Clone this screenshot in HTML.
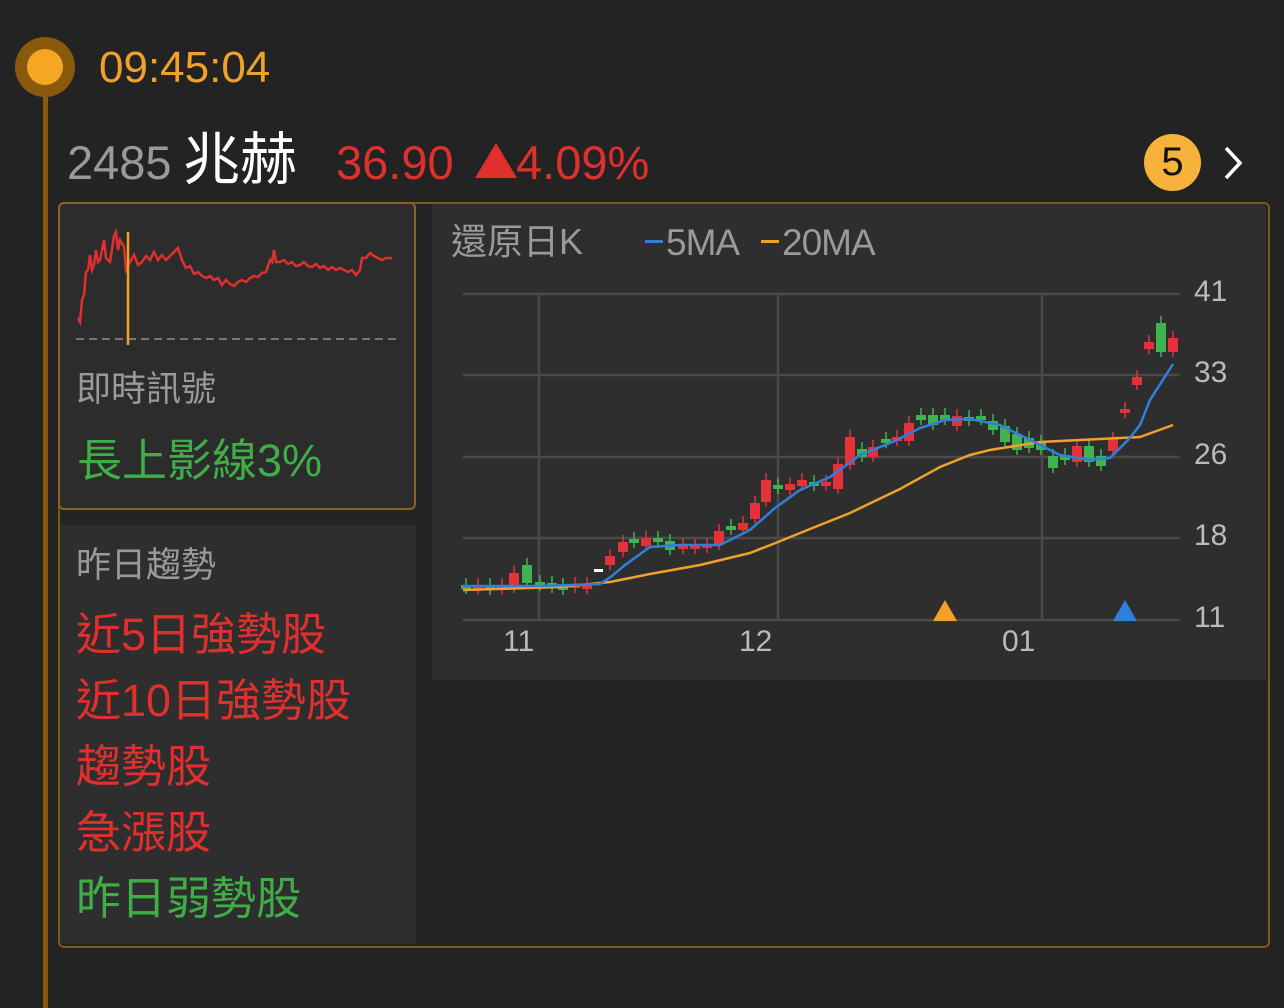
<!DOCTYPE html>
<html><head><meta charset="utf-8"><style>
body{margin:0;width:1284px;height:1008px;background:#232323;position:relative;overflow:hidden;font-family:"Liberation Sans","Noto Sans CJK TC",sans-serif}
.a{position:absolute;white-space:nowrap;line-height:1}
</style></head><body>
<div class="a" style="left:43px;top:90px;width:5px;height:918px;background:#8a5a0c"></div>
<div class="a" style="left:15px;top:37px;width:60px;height:60px;border-radius:50%;background:#8a5a0c"></div>
<div class="a" style="left:27px;top:49px;width:36px;height:36px;border-radius:50%;background:#f5a623"></div>
<div class="a" style="left:99px;top:46px;font-size:44px;color:#f0a12a">09:45:04</div>
<div class="a" style="left:67px;top:139px;font-size:47px;color:#9a9a9a">2485</div>
<div class="a" style="left:183px;top:132px;font-size:57px;color:#fff">兆赫</div>
<div class="a" style="left:336px;top:139px;font-size:47px;color:#e0302e">36.90</div>
<svg class="a" style="left:474px;top:143px" width="44" height="36"><polygon points="22,0 43,35 1,35" fill="#e0302e"/></svg>
<div class="a" style="left:516px;top:139px;font-size:47px;color:#e0302e">4.09%</div>
<div class="a" style="left:1144px;top:134px;width:57px;height:57px;border-radius:50%;background:#f6b23a;color:#111;font-size:40px;text-align:center;line-height:57px">5</div>
<svg class="a" style="left:1220px;top:145px" width="30" height="36"><path d="M6 3 L20 18 L6 33" stroke="#fff" stroke-width="3.5" fill="none"/></svg>
<div class="a" style="left:58px;top:202px;width:1208px;height:742px;border:2px solid #7a5a1c;border-radius:6px"></div>
<div class="a" style="width:354px;height:304px;background:#2c2c2c;border:2px solid #8a6420;border-radius:6px;left:58px;top:202px"></div>
<div class="a" style="left:60px;top:525px;width:356px;height:419px;background:#2e2e2e"></div>
<div class="a" style="left:432px;top:204px;width:834px;height:476px;background:#2e2e2e"></div>
<svg class="a" style="left:0;top:0" width="1284" height="1008">
<line x1="76" y1="339" x2="400" y2="339" stroke="#777" stroke-width="2" stroke-dasharray="8,5"/>
<polyline fill="none" stroke="#e0302e" stroke-width="2.5" points="78,318 80,322 82,300 84,295 86,272 88,270 90,255 92,270 94,265 96,250 98,262 100,260 104,240 106,258 110,262 114,236 116,232 118,250 120,240 124,247 126,270 130,262 134,255 138,265 142,262 146,256 150,260 154,252 158,260 162,255 166,260 170,256 174,252 178,248 182,260 186,268 190,266 194,274 198,272 202,276 206,278 210,276 214,280 218,278 222,285 226,280 230,284 234,286 238,282 242,280 246,282 250,278 254,276 258,277 262,273 266,272 270,260 272,262 274,250 276,262 280,262 284,260 288,264 292,262 296,266 300,265 304,262 308,266 312,267 316,264 320,268 324,266 328,270 332,267 336,270 340,268 344,270 348,272 352,270 356,275 360,270 362,258 366,258 370,253 374,256 378,258 382,260 386,258 392,258"/>
<line x1="128" y1="232" x2="128" y2="345" stroke="#f0a12a" stroke-width="2.5"/>
<g stroke="#4a4a4a" stroke-width="2.5">
<line x1="463" y1="294" x2="1180" y2="294"/><line x1="463" y1="375" x2="1180" y2="375"/><line x1="463" y1="457" x2="1180" y2="457"/><line x1="463" y1="538" x2="1180" y2="538"/><line x1="463" y1="620" x2="1180" y2="620"/>
<line x1="539" y1="294" x2="539" y2="620"/><line x1="778" y1="294" x2="778" y2="620"/><line x1="1042" y1="294" x2="1042" y2="620"/>
</g>
<g id="c"></g>
<polyline fill="none" stroke="#f0a12a" stroke-width="2.5" points="463,590 560,587 610,582 650,574 700,565 750,553 778,542 810,529 850,513 900,489 940,467 970,455 990,450 1040,442 1100,439 1140,437 1173,425"/>
<polyline fill="none" stroke="#2f7fdc" stroke-width="2.5" points="463,586 540,586 600,584 612,576 625,565 650,547 680,545 720,545 750,530 775,508 800,490 830,477 860,455 895,441 920,428 945,420 970,419 1000,425 1030,440 1060,455 1090,460 1110,458 1128,440 1140,425 1150,400 1173,364"/>
<polygon points="945,600 933,621 957,621" fill="#f0a12a"/>
<polygon points="1125,600 1113,621 1137,621" fill="#2f7fdc"/>
<rect x="594" y="569" width="9" height="3" fill="#fff"/>
<rect x="645" y="240" width="18" height="3" fill="#2f7fdc"/>
<rect x="761" y="240" width="18" height="3" fill="#f0a12a"/>
</svg>
<script>
var d=[[466,585,589,'g'],[478,585,589,'r'],[490,585,590,'g'],[502,585,590,'r'],[514,573,588,'r'],[527,565,583,'g'],[540,582,586,'g'],[552,583,588,'g'],[563,585,590,'g'],[575,584,588,'r'],[587,584,589,'r'],[610,556,565,'r'],[623,542,552,'r'],[634,539,543,'g'],[646,538,546,'r'],[658,538,542,'g'],[670,541,550,'g'],[683,545,549,'r'],[695,546,549,'r'],[707,545,548,'r'],[719,531,545,'r'],[731,526,530,'g'],[743,523,530,'r'],[755,503,519,'r'],[766,480,502,'r'],[778,485,489,'g'],[790,484,490,'r'],[802,480,486,'r'],[814,482,486,'g'],[826,482,486,'r'],[838,464,489,'r'],[850,437,465,'r'],[862,449,457,'g'],[873,447,457,'r'],[886,439,443,'g'],[897,437,441,'r'],[909,423,441,'r'],[921,415,420,'g'],[933,415,425,'g'],[945,415,420,'g'],[957,416,426,'r'],[969,417,421,'g'],[981,416,420,'g'],[993,421,430,'g'],[1005,426,442,'g'],[1017,434,450,'g'],[1029,438,448,'g'],[1041,442,450,'g'],[1053,456,468,'g'],[1065,455,460,'g'],[1077,446,462,'r'],[1089,446,462,'g'],[1101,456,466,'g'],[1113,439,451,'r'],[1125,409,413,'r'],[1137,377,385,'r'],[1149,342,349,'r'],[1161,323,352,'g'],[1173,338,352,'r']];
var s='';d.forEach(function(c){var col=c[3]=='r'?'#e4313a':'#3fb34f';s+='<line x1="'+c[0]+'" x2="'+c[0]+'" y1="'+(c[1]-7)+'" y2="'+(c[2]+5)+'" stroke="'+col+'" stroke-width="1.5"/><rect x="'+(c[0]-5)+'" y="'+c[1]+'" width="10" height="'+Math.max(3,c[2]-c[1])+'" fill="'+col+'"/>';});
document.getElementById('c').innerHTML=s;
</script>
<div class="a" style="left:76px;top:372px;font-size:35px;color:#9a9a9a">即時訊號</div>
<div class="a" style="left:77px;top:438px;font-size:45px;color:#3fae49">長上影線3%</div>
<div class="a" style="left:76px;top:548px;font-size:35px;color:#9a9a9a">昨日趨勢</div>
<div class="a" style="left:76px;top:612px;font-size:45px;color:#e0302e">近5日強勢股</div>
<div class="a" style="left:76px;top:678px;font-size:45px;color:#e0302e">近10日強勢股</div>
<div class="a" style="left:76px;top:744px;font-size:45px;color:#e0302e">趨勢股</div>
<div class="a" style="left:76px;top:810px;font-size:45px;color:#e0302e">急漲股</div>
<div class="a" style="left:76px;top:876px;font-size:45px;color:#3fae49">昨日弱勢股</div>
<div class="a" style="left:451px;top:224px;font-size:36px;color:#9a9a9a">還原日K</div>
<div class="a" style="left:666px;top:224px;font-size:37px;color:#9a9a9a;letter-spacing:-1px">5MA</div>
<div class="a" style="left:782px;top:224px;font-size:37px;color:#9a9a9a;letter-spacing:-1px">20MA</div>
<div class="a" style="left:1194px;top:277px;font-size:30px;color:#bbb">41</div>
<div class="a" style="left:1194px;top:358px;font-size:30px;color:#bbb">33</div>
<div class="a" style="left:1194px;top:440px;font-size:30px;color:#bbb">26</div>
<div class="a" style="left:1194px;top:521px;font-size:30px;color:#bbb">18</div>
<div class="a" style="left:1194px;top:603px;font-size:30px;color:#bbb">11</div>
<div class="a" style="left:503px;top:627px;font-size:30px;color:#bbb">11</div>
<div class="a" style="left:739px;top:627px;font-size:30px;color:#bbb">12</div>
<div class="a" style="left:1002px;top:627px;font-size:30px;color:#bbb">01</div>
</body></html>
